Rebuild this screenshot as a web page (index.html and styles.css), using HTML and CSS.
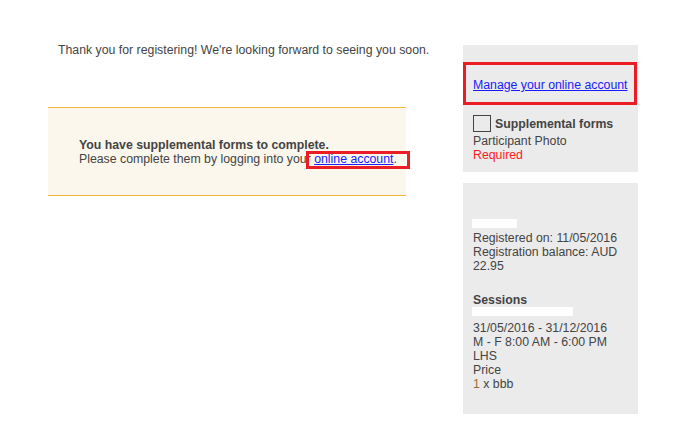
FILE: index.html
```html
<!DOCTYPE html>
<html>
<head>
<meta charset="utf-8">
<link rel="stylesheet" href="styles.css">
</head>
<body>
<div class="page">
  <div class="main">
    <p class="intro">Thank you for registering! We're looking forward to seeing you soon.</p>
    <div class="notice">
      <div class="notice-title">You have supplemental forms to complete.</div>
      <div>Please complete them by logging into your <span class="mark"><a href="#">online account</a>.</span></div>
    </div>
  </div>
  <aside class="sidebar">
    <div class="panel panel-top">
      <div class="manage"><a href="#">Manage your online account</a></div>
      <div class="forms-row"><span class="checkbox"></span><span class="forms-title">Supplemental forms</span></div>
      <div>Participant Photo</div>
      <div class="required">Required</div>
    </div>
    <div class="panel panel-detail">
      <div class="masked"><span class="mask mask-name"></span></div>
      <div>Registered on: 11/05/2016</div>
      <div>Registration balance: AUD 22.95</div>
      <div class="sessions-title">Sessions</div>
      <div class="masked"><span class="mask mask-session"></span></div>
      <div>31/05/2016 - 31/12/2016</div>
      <div>M - F 8:00 AM - 6:00 PM</div>
      <div>LHS</div>
      <div>Price</div>
      <div><span class="qty">1</span> x bbb</div>
    </div>
  </aside>
</div>
</body>
</html>
```
FILE: styles.css
```css
html, body {
  margin: 0;
  padding: 0;
  background: #ffffff;
}
body {
  font-family: "Liberation Sans", Arial, sans-serif;
  font-size: 12.3px;
  line-height: 14px;
  color: #444444;
}
.page {
  display: flex;
  align-items: flex-start;
  padding-left: 48px;
}
.main {
  width: 358px;
  flex: none;
}
.intro {
  margin: 43px 0 0 10px;
  white-space: nowrap;
}
.notice {
  margin-top: 50px;
  background: #fbf7ec;
  border-top: 1px solid #f3b53a;
  border-bottom: 1px solid #f3b53a;
  padding: 30px 10px 29px 31px;
  white-space: nowrap;
}
.notice-title {
  font-weight: bold;
}
.mark {
  display: inline-block;
  position: relative;
}
.mark::after {
  content: "";
  position: absolute;
  left: -8px;
  top: -1px;
  right: -13px;
  bottom: -3px;
  border: 3px solid #ec1c24;
}
a {
  color: #1a1aff;
  text-decoration: underline;
}
.sidebar {
  margin-left: 57px;
  margin-top: 45px;
  width: 175px;
  flex: none;
  display: flex;
  flex-direction: column;
  gap: 11px;
}
.panel {
  background: #ebebeb;
  padding: 0 10px;
}
.panel-top {
  padding-top: 17px;
  padding-bottom: 10px;
}
.manage {
  margin: 0 -9px 0 -10px;
  border: 3px solid #ec1c24;
  padding: 13px 7px 10px 7px;
  white-space: nowrap;
}
.forms-row {
  display: flex;
  align-items: center;
  gap: 4px;
  margin-top: 9px;
  height: 19px;
  margin-bottom: 1px;
}
.checkbox {
  width: 16px;
  height: 15px;
  border: 1px solid #444444;
  flex: none;
}
.forms-title {
  font-weight: bold;
}
.required {
  color: #ff1a1a;
}
.panel-detail {
  padding-top: 34px;
  padding-bottom: 24px;
  height: 173px;
}
.masked {
  height: 14px;
  position: relative;
}
.mask {
  position: absolute;
  left: -1px;
  top: 2px;
  height: 9px;
  background: #ffffff;
}
.mask-name {
  width: 45px;
}
.mask-session {
  width: 101px;
  top: 0;
}
.sessions-title {
  font-weight: bold;
  margin-top: 20px;
}
.qty {
  color: #97702b;
}
```
